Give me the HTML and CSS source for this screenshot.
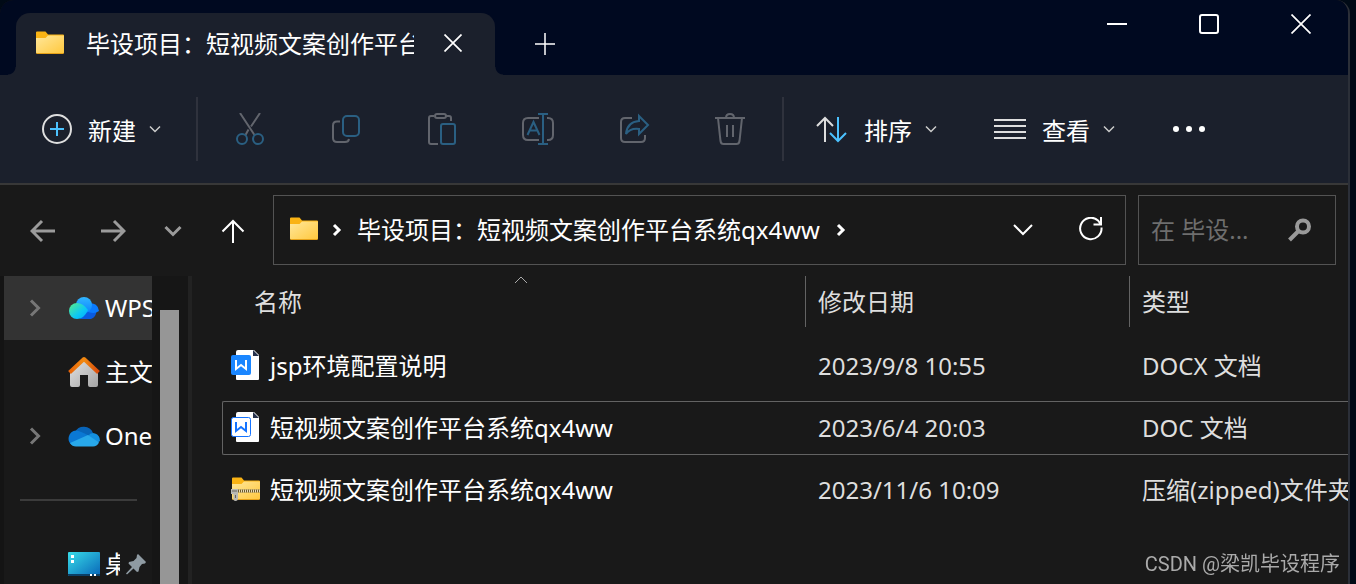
FILE: index.html
```
<!DOCTYPE html>
<html lang="zh-CN">

<head>
    <meta charset="UTF-8">
    <meta name="viewport" content="width=device-width, initial-scale=1.0">
    <title>毕设项目：短视频文案创作平台系统qx4ww</title>
    <link rel="stylesheet" href="styles.css">
</head>

<body>
    <!-- 公用图形 -->
    <svg class="defs" width="0" height="0" aria-hidden="true">
        <defs>
            <linearGradient id="gold" x1="0" y1="0" x2="1" y2="1">
                <stop offset="0" stop-color="#ffe79b" />
                <stop offset="1" stop-color="#ffc83d" />
            </linearGradient>
            <symbol id="folder" viewBox="0 0 28 24">
                <path d="M0 1.5Q0 .5 1 .5H9.500L12 3.500H27Q28 3.500 28 4.500V12H0z" fill="#fab314" />
                <path d="M0 7H9.500L12 4.500H28V21.500Q28 22.500 27 22.500H1Q0 22.500 0 21.500z" fill="url(#gold)" />
                <path d="M.5 22.500H27.500" stroke="#e6a117" />
            </symbol>
            <symbol id="down" viewBox="0 0 12 12">
                <path d="M1 3.500L6 8.500L11 3.500" fill="none" stroke="currentColor" stroke-width="1.500" />
            </symbol>
            <symbol id="crumb" viewBox="0 0 12 14">
                <path d="M4 2L9 7L4 12" fill="none" stroke="currentColor" stroke-width="3" />
            </symbol>
            <symbol id="expand" viewBox="0 0 14 18">
                <path d="M3 1.500L10.500 9L3 16.500" fill="none" stroke="currentColor" stroke-width="3" />
            </symbol>
        </defs>
    </svg>

    <div class="window">
        <header class="titlebar">
            <div class="tab">
                <svg class="folder" width="28" height="24"><use href="#folder" /></svg>
                <span class="tab-title">毕设项目：短视频文案创作平台系统qx4ww</span>
                <button class="tab-close" aria-label="关闭标签页">
                    <svg width="18" height="18" viewBox="0 0 18 18"><path d="M.5 .5L17.500 17.500M17.500 .5L.5 17.500" stroke="#fff" stroke-width="1.700" /></svg>
                </button>
            </div>
            <button class="tab-new" aria-label="新建标签页">
                <svg width="20" height="22" viewBox="0 0 20 22"><path d="M0 11H20M10 0V22" stroke="#fff" stroke-width="1.500" /></svg>
            </button>
            <div class="controls">
                <button aria-label="最小化">
                    <svg width="20" height="20" viewBox="0 0 20 20"><path d="M0 10H20" stroke="#fff" stroke-width="2" /></svg>
                </button>
                <button aria-label="最大化">
                    <svg width="20" height="20" viewBox="0 0 20 20"><rect x="1" y="1" width="18" height="18" rx="2" fill="none" stroke="#fff" stroke-width="2" /></svg>
                </button>
                <button aria-label="关闭">
                    <svg width="20" height="20" viewBox="0 0 20 20"><path d="M.5 .5L19.500 19.500M19.500 .5L.5 19.500" stroke="#fff" stroke-width="1.700" /></svg>
                </button>
            </div>
        </header>

        <div class="toolbar">
            <button class="cmd">
                <svg width="30" height="30" viewBox="0 0 30 30" fill="none" stroke-width="2">
                    <circle cx="15" cy="15" r="14" stroke="#dedede" />
                    <path d="M8 15H22M15 8V22" stroke="#4cc2ff" />
                </svg>
                <span>新建</span>
                <svg class="arrow" width="12" height="12"><use href="#down" /></svg>
            </button>
            <i class="split"></i>
            <div class="tools">
                <button disabled aria-label="剪切">
                    <svg width="32" height="32" viewBox="0 0 32 32">
                        <path class="g" d="M6 0L20.500 22M26 0L17 13.500M14.500 16.500L11.500 22" />
                        <circle class="b" cx="8" cy="26" r="5" />
                        <circle class="b" cx="24" cy="26" r="5" />
                    </svg>
                </button>
                <button disabled aria-label="复制">
                    <svg width="32" height="32" viewBox="0 0 32 32">
                        <path class="g" d="M10 8.500H7Q3 8.500 3 12.500V25Q3 29 7 29H15Q18.500 29 19 26" />
                        <rect class="b" x="13" y="3" width="16" height="20" rx="4" />
                    </svg>
                </button>
                <button disabled aria-label="粘贴">
                    <svg width="32" height="32" viewBox="0 0 32 32">
                        <path class="g" d="M8 3H5Q3 3 3 5V29Q3 31 5 31H12M20 3H23Q25 3 25 5V8" />
                        <rect class="g" x="9" y="1" width="11" height="4" rx="2" />
                        <rect class="b" x="15" y="11" width="14" height="20" rx="2" />
                    </svg>
                </button>
                <button disabled aria-label="重命名">
                    <svg width="34" height="32" viewBox="0 0 34 32">
                        <path class="g" d="M18 5H7Q2 5 2 10V22Q2 27 7 27H18M26 5H27Q32 5 32 10V22Q32 27 27 27H26" />
                        <path class="b" d="M6.500 22L12.500 9L18.500 22M9 17.500H16M22 1V31M17 1H27M17 31H27" />
                    </svg>
                </button>
                <button disabled aria-label="共享">
                    <svg width="32" height="32" viewBox="0 0 32 32">
                        <path class="g" d="M14 5H7Q3 5 3 9V25Q3 29 7 29H23Q27 29 27 25V22" />
                        <path class="b" d="M21 3L30 12L21 21V16Q12 15 8 21Q9 9 21 8z" />
                    </svg>
                </button>
                <button disabled aria-label="删除">
                    <svg width="32" height="32" viewBox="0 0 32 32">
                        <path class="g" d="M1 5H31M12 5Q12 1 16 1T20 5M4 5L6.500 28Q7 31 9.500 31H22.500Q25 31 25.500 28L28 5M13 12V24M19 12V24" />
                    </svg>
                </button>
            </div>
            <i class="split"></i>
            <div class="menus">
                <button class="cmd">
                    <svg width="32" height="28" viewBox="0 0 32 28" fill="none" stroke-width="2">
                        <path d="M9 27V3M1 11L9 3L17 11" stroke="#dedede" />
                        <path d="M22 2V26M14 18L22 26L30 18" stroke="#4cc2ff" />
                    </svg>
                    <span>排序</span>
                    <svg class="arrow" width="12" height="12"><use href="#down" /></svg>
                </button>
                <button class="cmd">
                    <svg width="32" height="20" viewBox="0 0 32 20"><path d="M0 1H32M0 7H32M0 13H32M0 19H32" stroke="#dedede" stroke-width="2" /></svg>
                    <span>查看</span>
                    <svg class="arrow" width="12" height="12"><use href="#down" /></svg>
                </button>
                <button class="cmd" aria-label="查看更多">
                    <svg width="34" height="8" viewBox="0 0 34 8" fill="#fff"><circle cx="4" cy="4" r="3" /><circle cx="17" cy="4" r="3" /><circle cx="30" cy="4" r="3" /></svg>
                </button>
            </div>
        </div>

        <nav class="navbar">
            <button class="go dim" aria-label="后退">
                <svg width="26" height="24" viewBox="0 0 26 24"><path d="M25 12H2M12 2L2 12L12 22" /></svg>
            </button>
            <button class="go dim" aria-label="前进">
                <svg width="26" height="24" viewBox="0 0 26 24"><path d="M1 12H24M14 2L24 12L14 22" /></svg>
            </button>
            <button class="go dim recent" aria-label="最近浏览的位置">
                <svg width="18" height="12" viewBox="0 0 18 12"><path d="M1.500 2L9 9.500L16.500 2" /></svg>
            </button>
            <button class="go up" aria-label="向上">
                <svg width="24" height="24" viewBox="0 0 24 24"><path d="M12 24V2M1.500 12.500L12 2L22.500 12.500" /></svg>
            </button>
            <div class="address">
                <svg class="folder" width="28" height="24"><use href="#folder" /></svg>
                <svg class="sep" width="12" height="14"><use href="#crumb" /></svg>
                <a href="#">毕设项目：短视频文案创作平台系统qx4ww</a>
                <svg class="sep" width="12" height="14"><use href="#crumb" /></svg>
                <button class="history" aria-label="以前的位置">
                    <svg width="20" height="12" viewBox="0 0 20 12"><path d="M1 1L10 10L19 1" fill="none" stroke="#fff" stroke-width="2" /></svg>
                </button>
                <button class="refresh" aria-label="刷新">
                    <svg width="24" height="24" viewBox="0 0 24 24" fill="none" stroke="#fff" stroke-width="2"><path d="M22.500 10.500A10.700 10.700 0 1 1 19 3.500L22 7.500M22 0V7.500H14.500" /></svg>
                </button>
            </div>
            <form class="search">
                <input type="text" placeholder="在 毕设..." aria-label="搜索">
                <button type="button" aria-label="搜索">
                    <svg width="24" height="24" viewBox="0 0 24 24" fill="none" stroke="#999"><circle cx="15" cy="8.500" r="6" stroke-width="4" /><path d="M11 12.500L1.500 22" stroke-width="4" /></svg>
                </button>
            </form>
        </nav>

        <div class="explorer">
            <aside class="tree">
                <a class="node now" href="#">
                    <svg class="expand" width="14" height="18"><use href="#expand" /></svg>
                    <svg width="32" height="24" viewBox="0 0 32 24">
                        <defs>
                            <linearGradient id="w1" x1="0" y1="0" x2="1" y2="1"><stop offset=".1" stop-color="#4be89a" /><stop offset=".6" stop-color="#0cc8f4" /><stop offset="1" stop-color="#00a8ff" /></linearGradient>
                            <linearGradient id="w2" x1="0" y1="0" x2="0" y2="1"><stop offset="0" stop-color="#31b6ff" /><stop offset="1" stop-color="#0a84ff" /></linearGradient>
                        </defs>
                        <path d="M12 23L22 7A8.500 8.500 0 0 1 23 23z" fill="#0a5be0" />
                        <path d="M21 7.500A8 8 0 0 1 31 15Q26 19 18 15z" fill="#0a7bff" />
                        <circle cx="16" cy="9" r="8" fill="url(#w2)" />
                        <path d="M9 7Q15 7 20 14Q16 23 9 23A8 8 0 0 1 9 7z" fill="url(#w1)" />
                    </svg>
                    <span class="name">WPS云盘</span>
                </a>
                <a class="node" href="#">
                    <i class="expand"></i>
                    <svg width="32" height="32" viewBox="0 0 32 32">
                        <defs>
                            <linearGradient id="h1" x1="0" y1="0" x2="1" y2="1"><stop offset="0" stop-color="#e4e4e4" /><stop offset="1" stop-color="#a4a4a4" /></linearGradient>
                            <linearGradient id="h2" x1="0" y1="0" x2="1" y2="0"><stop offset="0" stop-color="#e8650a" /><stop offset=".5" stop-color="#f28a10" /><stop offset="1" stop-color="#d84a0c" /></linearGradient>
                        </defs>
                        <path d="M2 15L16 3L30 15V29Q30 31 28 31H22Q20 31 20 29V19H12V29Q12 31 10 31H4Q2 31 2 29z" fill="url(#h1)" />
                        <path d="M1.500 16.500L16 3L30.500 16.500" fill="none" stroke="url(#h2)" stroke-width="4" stroke-linejoin="round" />
                    </svg>
                    <span class="name">主文件夹</span>
                </a>
                <a class="node" href="#">
                    <svg class="expand" width="14" height="18"><use href="#expand" /></svg>
                    <svg width="32" height="22" viewBox="0 0 32 22">
                        <path d="M7 7A10 10 0 0 1 25 8L19 12z" fill="#0864b8" />
                        <path d="M8 5.500Q13 6 21 11L4 20A8 8 0 0 1 8 5.500z" fill="#0a78d4" />
                        <path d="M20 11Q23 7 27 8.500Q32 10 32 16L29 18z" fill="#1490df" />
                        <path d="M2 18L20 10L31 17.500Q29 21.500 25 21.500H8Q4 21.500 2 18z" fill="#28a8ea" />
                    </svg>
                    <span class="name">OneDrive</span>
                </a>
                <hr>
                <a class="node" href="#">
                    <i class="expand"></i>
                    <svg width="32" height="24" viewBox="0 0 32 24">
                        <defs><linearGradient id="d1" x1="0" y1="0" x2="1" y2="1"><stop offset="0" stop-color="#38dce8" /><stop offset="1" stop-color="#0866b8" /></linearGradient></defs>
                        <rect width="32" height="24" rx="1" fill="url(#d1)" />
                        <path d="M0 22H32V23Q32 24 31 24H1Q0 24 0 23z" fill="#0b3f66" />
                        <path d="M3 3H6V6H3zM3 8H6V11H3zM22 22H24V24H22zM26 22H28V24H26z" fill="#fff" />
                    </svg>
                    <span class="name short">桌面</span>
                    <svg class="pin" width="22" height="22" viewBox="0 0 22 22"><path d="M13 1L21 9L20 10.500L17 11L14.500 14L13.500 18.500L12 19L8.500 15.500L2 21.500L1 20.500L7 14L3.500 10.500L4 9L8.500 8L11.500 5L12 2z" fill="#8f9ba3" /></svg>
                </a>
            </aside>
            <div class="scroll"><div class="thumb"></div></div>
            <main class="files">
                <table>
                    <colgroup>
                        <col class="col-name">
                        <col class="col-date">
                        <col>
                    </colgroup>
                    <thead>
                        <tr>
                            <th>
                                <div class="head first">名称
                                    <svg class="sorted" width="14" height="8" viewBox="0 0 14 8"><path d="M1 7L7 1L13 7" fill="none" stroke="#aaa" /></svg>
                                </div>
                            </th>
                            <th><div class="head">修改日期</div></th>
                            <th><div class="head">类型</div></th>
                        </tr>
                    </thead>
                    <tbody>
                        <tr>
                            <td>
                                <div class="cell file">
                                    <svg width="30" height="32" viewBox="0 0 30 32">
                                        <path d="M7 1H23L28 6V30Q28 31 27 31H6Q5 31 5 30V3Q5 1 7 1z" fill="#fff" />
                                        <path d="M22 1V7H28z" fill="#25304a" />
                                        <rect y="6" width="20" height="20" rx="2" fill="#1a86ff" />
                                        <path d="M5 11V20L10 16L15 20V11" fill="none" stroke="#fff" stroke-width="2" />
                                    </svg>
                                    <span>jsp环境配置说明</span>
                                </div>
                            </td>
                            <td><div class="cell">2023/9/8 10:55</div></td>
                            <td><div class="cell">DOCX 文档</div></td>
                        </tr>
                        <tr class="focus">
                            <td>
                                <div class="cell file">
                                    <svg width="30" height="32" viewBox="0 0 30 32">
                                        <path d="M7 1H23L28 6V30Q28 31 27 31H6Q5 31 5 30V3Q5 1 7 1z" fill="#fff" />
                                        <path d="M22 1V7H28z" fill="#25304a" />
                                        <rect x=".5" y="6.500" width="19" height="19" rx="2" fill="#fff" stroke="#1473ff" />
                                        <path d="M5 11V20L10 16L15 20V11" fill="none" stroke="#1473ff" stroke-width="2" />
                                    </svg>
                                    <span>短视频文案创作平台系统qx4ww</span>
                                </div>
                            </td>
                            <td><div class="cell">2023/6/4 20:03</div></td>
                            <td><div class="cell">DOC 文档</div></td>
                        </tr>
                        <tr>
                            <td>
                                <div class="cell file">
                                    <svg width="30" height="24" viewBox="0 0 30 24">
                                        <use href="#folder" x="1" y="0" width="28" height="24" />
                                        <path d="M4 14H29" stroke="#6b5a2c" stroke-width="3" />
                                        <path d="M6 14H29" stroke="#e8dcb8" stroke-width="3" stroke-dasharray="1 1" />
                                        <path d="M0 12H7V21Q7 24 4.500 24T2.500 21V17H0z" fill="#b9b9b4" />
                                        <path d="M1 14H6M4.500 18V21" stroke="#66645e" />
                                    </svg>
                                    <span>短视频文案创作平台系统qx4ww</span>
                                </div>
                            </td>
                            <td><div class="cell">2023/11/6 10:09</div></td>
                            <td><div class="cell">压缩(zipped)文件夹</div></td>
                        </tr>
                    </tbody>
                </table>
            </main>
        </div>
    </div>
    <div class="watermark">CSDN @梁凯毕设程序</div>
</body>

</html>
```

FILE: styles.css
```
* {
    box-sizing: border-box;
}

body {
    margin: 0;
    padding-right: 6px;
    overflow: hidden;
    background: #000a16;
    color: #fff;
    font: 24px/32px "Noto Sans", "Noto Sans CJK SC", sans-serif;
}

.defs {
    position: absolute;
}

svg {
    display: block;
    flex: none;
}

button,
input {
    margin: 0;
    padding: 0;
    border: 0;
    background: none;
    color: inherit;
    font: inherit;
}

button {
    display: flex;
    align-items: center;
    justify-content: center;
}

a {
    color: inherit;
    text-decoration: none;
}

.window {
    display: flex;
    flex-direction: column;
    min-height: 100vh;
    overflow: hidden;
    background: #191919;
    border-right: 2px solid #2b2f38;
    border-radius: 14px 14px 0 0;
}

/* 标题栏 */
.titlebar {
    display: flex;
    align-items: flex-end;
    height: 75px;
    padding-left: 16px;
    background: #000920;
}

.tab {
    position: relative;
    display: flex;
    align-items: center;
    width: 479px;
    height: 62px;
    padding: 0 33px 0 20px;
    background: #1b202c;
    border-radius: 14px 14px 0 0;
}

.tab::before,
.tab::after {
    content: "";
    position: absolute;
    bottom: 0;
    width: 8px;
    height: 8px;
}

.tab::before {
    left: -8px;
    background: radial-gradient(circle at 0 0, #000920 7px, #1b202c 8px);
}

.tab::after {
    right: -8px;
    background: radial-gradient(circle at 100% 0, #000920 7px, #1b202c 8px);
}

.folder {
    margin-bottom: 3px;
}

.tab-title {
    flex: 1;
    margin: 0 30px 0 22px;
    overflow: hidden;
    white-space: nowrap;
}

.tab-close {
    margin-bottom: 2px;
}

.tab-new {
    width: 100px;
    height: 62px;
}

.controls {
    display: flex;
    align-self: flex-start;
    margin: 0 1px 0 auto;
}

.controls button {
    width: 92px;
    height: 48px;
}

/* 工具栏 */
.toolbar {
    display: flex;
    align-items: center;
    height: 110px;
    padding: 0 42px;
    background: #1b202c;
    border-bottom: 2px solid #383838;
}

.cmd span {
    margin: 0 13px 0 16px;
    padding-top: 3px;
    white-space: nowrap;
}

.arrow {
    color: #ccc;
}

.split {
    width: 2px;
    height: 64px;
    margin: 0 4px;
    background: #2f323d;
}

.cmd + .split {
    margin-left: 35px;
}

.tools {
    display: flex;
}

.tools button {
    width: 96px;
    height: 64px;
}

.tools svg {
    fill: none;
    stroke-width: 2;
}

.g {
    stroke: #62656d;
}

.b {
    stroke: #2a5f82;
}

.menus {
    display: flex;
    gap: 57px;
    margin-left: 28px;
}

/* 地址栏 */
.navbar {
    display: flex;
    height: 91px;
    padding: 10px 12px 11px 8px;
}

.go {
    width: 70px;
    padding-top: 2px;
}

.go svg {
    fill: none;
    stroke: #fff;
    stroke-width: 2;
}

.go.dim svg {
    stroke: #9b9b9b;
    stroke-width: 3;
}

.recent {
    width: 50px;
}

.up {
    margin-right: 5px;
}

.address {
    display: flex;
    flex: 1;
    align-items: center;
    min-width: 0;
    padding: 0 22px 0 16px;
    border: 1px solid #535353;
}

.address a {
    margin: 0 2px 0 3px;
    overflow: hidden;
    white-space: nowrap;
}

.sep {
    margin: 0 12px;
}

.history {
    margin-left: auto;
}

.refresh {
    margin: 0 0 3px 46px;
}

.search {
    display: flex;
    width: 198px;
    margin-left: 12px;
    padding: 0 23px 0 12px;
    border: 1px solid #535353;
}

.search input {
    flex: 1;
    min-width: 0;
    outline: none;
}

.search input::placeholder {
    color: #6e6e6e;
}

/* 主体 */
.explorer {
    display: grid;
    flex: 1;
    grid-template-columns: 152px 36px 1fr;
}

.tree {
    overflow: hidden;
    border-left: 4px solid #141414;
}

.node {
    display: flex;
    align-items: center;
    height: 64px;
    padding-left: 24px;
}

.node.now {
    background: #333;
}

.expand {
    flex: none;
    width: 14px;
    margin-right: 26px;
    color: #777;
}

.name {
    flex: none;
    margin-left: 5px;
    overflow: hidden;
    white-space: nowrap;
}

.name.short {
    width: 15px;
}

.pin {
    margin-left: 5px;
}

.tree hr {
    height: 2px;
    margin: 31px 15px 31px 16px;
    border: 0;
    background: #3b3b3b;
}

.scroll {
    display: flex;
    padding: 34px 9px 0 8px;
    background: #161616;
}

.thumb {
    flex: 1;
    background: #969696;
}

.files {
    min-width: 0;
    padding-left: 30px;
    overflow: hidden;
    border-left: 4px solid #222;
}

table {
    width: 100%;
    table-layout: fixed;
    border-spacing: 0;
}

.col-name {
    width: 583px;
}

.col-date {
    width: 324px;
}

th,
td {
    padding: 0;
    text-align: left;
    vertical-align: top;
    font-weight: 400;
    color: #dedede;
}

th {
    height: 60px;
}

.head {
    position: relative;
    height: 51px;
    padding-left: 12px;
    border-left: 1px solid #636363;
    line-height: 52px;
}

.head.first {
    padding-left: 31px;
    border-color: transparent;
}

.sorted {
    position: absolute;
    top: 0;
    left: 50%;
}

td {
    height: 62px;
    padding-top: 3px;
}

.cell {
    height: 54px;
    padding-left: 13px;
    overflow: hidden;
    border: 0 solid transparent;
    border-width: 1px 0;
    line-height: 51px;
    white-space: nowrap;
}

.file {
    display: flex;
    align-items: center;
    gap: 9px;
    padding: 0 0 2px 8px;
    border-left-width: 1px;
    color: #fff;
}

.focus .cell {
    border-color: #636363;
}

.focus .file {
    border-radius: 2px 0 0 2px;
}

.watermark {
    position: fixed;
    right: 16px;
    bottom: 4px;
    color: #aaa;
    font: 20px/32px Roboto, "Noto Sans CJK SC", sans-serif;
}
```
